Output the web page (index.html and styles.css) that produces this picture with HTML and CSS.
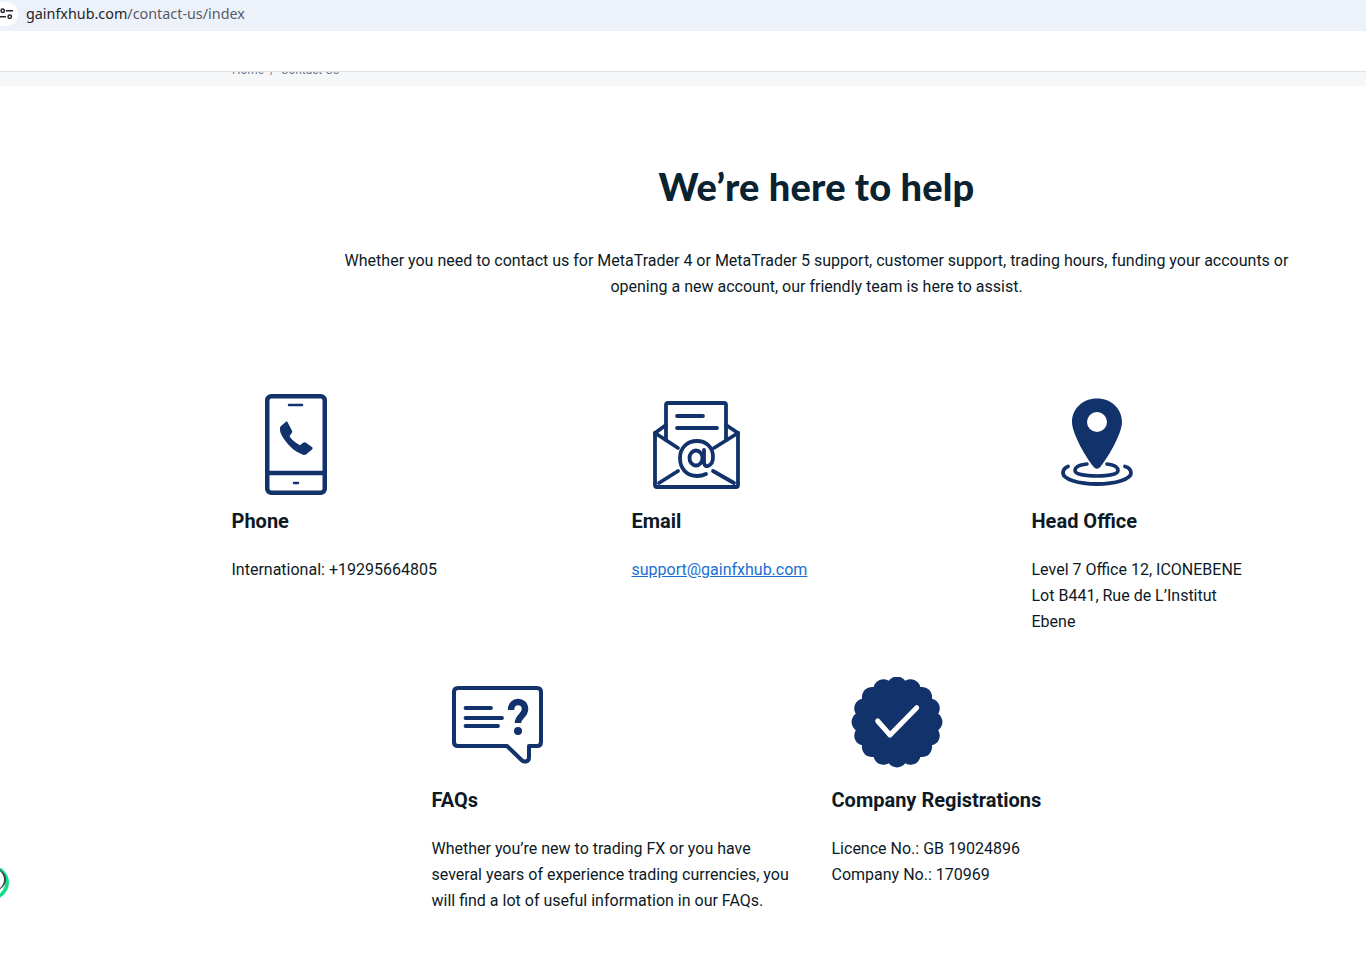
FILE: index.html
```html
<!DOCTYPE html>
<html lang="en">
<head>
<meta charset="utf-8">
<title>Contact Us</title>
<link rel="stylesheet" href="styles.css">
</head>
<body>
<div class="address-bar">
  <span class="site-btn">
    <svg width="14" height="12" viewBox="0 0 14 12" fill="none" stroke="#20242c" stroke-width="1.5"><circle cx="2.700" cy="2.700" r="1.700"/><path d="M6 2.700H13"/><path d="M0 8.800H6"/><circle cx="9.700" cy="8.800" r="1.700"/></svg>
  </span>
  <span class="url"><span class="host">gainfxhub.com</span>/contact-us/index</span>
</div>
<header class="nav-blank"></header>
<div class="crumb-band"><div class="crumbs">Home &nbsp;/&nbsp; Contact Us</div></div>
<main class="container">
  <section class="intro">
    <h1>We’re here to help</h1>
    <p>Whether you need to contact us for MetaTrader 4 or MetaTrader 5 support, customer support, trading hours, funding your accounts or opening a new account, our friendly team is here to assist.</p>
  </section>
  <section class="row row-top">
    <article class="card">
      <div class="icon">
        <svg width="112" height="103" viewBox="0 0 112 103" fill="none" stroke="#12326b" stroke-width="4.500">
          <rect x="35.250" y="3.250" width="57.500" height="96.500" rx="4"/>
          <path d="M33 80H95" />
          <path d="M57 12H70" stroke-width="2.500" stroke-linecap="round"/>
          <path d="M62 90H66" stroke-width="2.500" stroke-linecap="round"/>
          <path stroke="none" fill="#12326b" d="M55.300 28.700L60.300 38.200Q60.500 39.500 59 41L57.500 43.500Q61 48.500 68 52.200L71 49.800Q72.500 48.800 74 49.800L80.500 54.500Q81 55.500 80 56.500L74 61.500Q73 62.300 71 61.800Q60 58 52 46Q47.500 40 48 35Q48 34 49 33L54 28.700Q55 28 55.300 28.700Z"/>
        </svg>
      </div>
      <h3>Phone</h3>
      <p>International: +19295664805</p>
    </article>
    <article class="card">
      <div class="icon">
        <svg width="112" height="103" viewBox="0 0 112 103" fill="none" stroke="#12326b" stroke-width="3.800" stroke-linecap="round" stroke-linejoin="round">
          <path d="M34 47V12Q34 10 36 10H92Q94 10 94 12V47"/>
          <path d="M23 40V92Q23 94 25 94H104Q106 94 106 92V40"/>
          <path d="M23 40L34 32"/>
          <path d="M106 40L94 32"/>
          <path d="M23 40L46 55"/>
          <path d="M106 40L82 55"/>
          <path d="M27 90L46 78"/>
          <path d="M102 90L81 78"/>
          <path d="M45 23H71"/>
          <path d="M45 35H85"/>
          <ellipse cx="64" cy="65" rx="6.500" ry="7.500" stroke-width="3.800"/>
          <path stroke-width="3.800" d="M72 57V70Q73 74 76 73Q81 71 81 64C81 53 73 48 65 48C55 48 48 55 48 65C48 76 55 83 65 83Q70 83 74 81"/>
        </svg>
      </div>
      <h3>Email</h3>
      <p><a href="#">support@gainfxhub.com</a></p>
    </article>
    <article class="card">
      <div class="icon">
        <svg width="112" height="103" viewBox="0 0 112 103" fill="none" stroke="#12326b">
          <path fill-rule="evenodd" stroke="none" fill="#12326b" d="M65 5.500C50.500 5.500 40 16 40 29C40 41 55 66 61 73C63.500 76.500 66.500 76.500 69 73C75 66 90 41 90 29C90 16 79.500 5.500 65 5.500ZM65 19A10 10 0 1 1 65 39A10 10 0 1 1 65 19Z"/>
          <path stroke-width="3.600" stroke-linecap="round" d="M55 71C46 72 43 74.500 43 77.500C43 81 52 83 65 83C78 83 86 81 86 77.500C86 74.500 83 72 75 71"/>
          <path stroke-width="3.800" stroke-linecap="round" d="M36 73.500C32 75 31 77.500 31 80C31 86 46 91 65 91C84 91 99 86 99 80C99 77.500 98 75 93 73.500"/>
        </svg>
      </div>
      <h3>Head Office</h3>
      <p>Level 7 Office 12, ICONEBENE<br>Lot B441, Rue de L’Institut<br>Ebene</p>
    </article>
  </section>
  <section class="row row-bottom">
    <article class="card">
      <div class="icon icon-small">
        <svg width="112" height="98" viewBox="0 -9 112 98" fill="none" stroke="#12326b" stroke-width="4" stroke-linecap="round" stroke-linejoin="round">
          <path d="M26 2H105Q109 2 109 6V56Q109 60 105 60H97V71Q97 75 94 75.500Q91.500 76 89.500 74L75 60H26Q22 60 22 56V6Q22 2 26 2Z"/>
          <path stroke-width="3.800" d="M33.500 22H59"/>
          <path stroke-width="3.800" d="M33.500 32H70"/>
          <path stroke-width="3.800" d="M33.500 40H66"/>
          <path stroke-width="6.500" stroke-linecap="butt" d="M79 24C79 13.500 93 13.500 93 23C93 30 86 30 86 37"/>
          <circle cx="86" cy="45" r="4" fill="#12326b" stroke="none"/>
        </svg>
      </div>
      <h3>FAQs</h3>
      <p>Whether you’re new to trading FX or you have several years of experience trading currencies, you will find a lot of useful information in our FAQs.</p>
    </article>
    <article class="card">
      <div class="icon icon-small">
        <svg width="112" height="98" viewBox="-65 -45 112 98" fill="none">
          <path fill="#12326b" d="M8.190 -41.190A10 10 0 0 1 23.330 -34.920A10 10 0 0 1 34.920 -23.330A10 10 0 0 1 41.190 -8.190A10 10 0 0 1 41.190 8.190A10 10 0 0 1 34.920 23.330A10 10 0 0 1 23.330 34.920A10 10 0 0 1 8.190 41.190A10 10 0 0 1 -8.190 41.190A10 10 0 0 1 -23.330 34.920A10 10 0 0 1 -34.920 23.330A10 10 0 0 1 -41.190 8.190A10 10 0 0 1 -41.190 -8.190A10 10 0 0 1 -34.920 -23.330A10 10 0 0 1 -23.330 -34.920A10 10 0 0 1 -8.190 -41.190A10 10 0 0 1 8.190 -41.190Z"/>
          <path stroke="#fff" stroke-width="5" stroke-linecap="round" stroke-linejoin="round" d="M-19.300 -1L-7 13L19.700 -14.300"/>
        </svg>
      </div>
      <h3>Company Registrations</h3>
      <p>Licence No.: GB 19024896<br>Company No.: 170969</p>
    </article>
  </section>
</main>
<div class="chat-edge"></div>
</body>
</html>
```
FILE: styles.css
```css
* { box-sizing: border-box; }
html, body { margin: 0; padding: 0; }
body {
  width: 1366px;
  height: 965px;
  overflow: hidden;
  background: #fff;
  color: #0d1a26;
  font-family: Roboto, "Liberation Sans", sans-serif;
  font-size: 16px;
  line-height: 26px;
  position: relative;
}
.address-bar {
  height: 31px;
  background: #edf1fa;
  display: flex;
  overflow: hidden;
}
.site-btn {
  width: 18px;
  height: 24px;
  margin-top: 2px;
  border-radius: 0 12px 12px 0;
  background: #fff;
  display: flex;
  align-items: center;
  flex: none;
  overflow: hidden;
}
.site-btn svg { flex: none; }
.url {
  margin: 4px 0 0 8px;
  font-family: "Noto Sans", sans-serif;
  font-size: 14.350px;
  line-height: 20px;
  color: #555b66;
}
.host { color: #1f2328; }
.nav-blank {
  height: 41px;
  background: #fff;
  border-bottom: 1px solid #dfe1e3;
}
.crumb-band {
  height: 14px;
  background: #f6f7f9;
  overflow: hidden;
  padding-left: 232px;
}
.crumbs {
  font-size: 11.900px;
  line-height: 16px;
  color: #6d7b8e;
  margin-top: -10px;
}
.container {
  width: 1200px;
  margin-left: 216.500px;
}
.intro {
  text-align: center;
  padding: 0 109px;
}
.intro h1 {
  margin: 75px 0 0;
  font-family: Lato, "Liberation Sans", sans-serif;
  font-size: 38px;
  line-height: 50px;
  font-weight: 900;
  letter-spacing: 0.170px;
  color: #0b2230;
}
.intro p { margin: 37px 0 0; }
.row {
  display: flex;
  justify-content: center;
}
.row-top { margin-top: 93px; }
.row-bottom { margin-top: 42px; }
.card {
  width: 400px;
  padding: 0 15px;
}
.card h3 {
  margin: 10px 0 0;
  font-size: 20px;
  line-height: 30px;
  font-weight: 700;
  color: #0d1a26;
}
.card p { margin: 21px 0 0; }
.icon { height: 103px; }
.icon svg { display: block; }
.icon-small { height: 98px; }
a { color: #1c6fd1; }
.chat-edge {
  position: absolute;
  left: -33px;
  top: 864px;
  width: 42px;
  height: 37px;
  border-radius: 50%;
  border-right: 4px solid #12dd88;
  border-bottom: 3px solid #12dd88;
  border-top: 2px solid transparent;
}
.chat-edge::before {
  content: "";
  position: absolute;
  inset: 0 -1px 5px 0;
  border-radius: 50%;
  border-right: 2px solid #3c4450;
}
```
